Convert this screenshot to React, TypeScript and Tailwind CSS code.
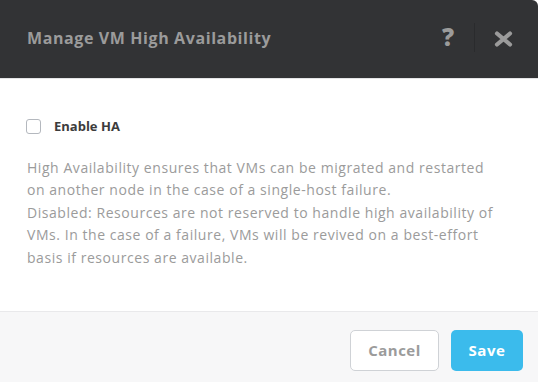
import { useState } from "react";

const App = () => {
  const [enabled, setEnabled] = useState(false);

  return (
    <div className="w-[538px] h-[382px] bg-white overflow-hidden font-['Open_Sans',sans-serif]">
      {/* Header */}
      <div className="h-[78px] bg-[#323335] rounded-tr-[6px] flex items-center justify-between pl-[27px] pr-[25px]">
        <h1 className="text-[16px] font-bold tracking-[0.6px] text-[#9b9b9b] mt-[-2px]">
          Manage VM High Availability
        </h1>
        <div className="flex items-center h-full">
          <span className="text-[24px] leading-none font-extrabold text-[#9b9b9b] mr-[20px] mt-[-4px]">?</span>
          <div className="w-px h-[29px] bg-[#2a2b2d] mr-[19px] mt-[-3px]" />
          <svg width="19" height="16" viewBox="0 0 19 16" className="mt-[-1px]">
            <path d="M3 2.5 L16 13.5 M16 2.5 L3 13.5" stroke="#9b9b9b" strokeWidth="4.2" strokeLinecap="round" />
          </svg>
        </div>
      </div>

      {/* Body */}
      <div className="h-[233px] border-t border-[#e4e4e6] pt-[38px] pl-[26px] pr-[20px]">
        <label className="flex items-center gap-[13px] cursor-pointer">
          <input
            type="checkbox"
            checked={enabled}
            onChange={() => setEnabled(!enabled)}
            className="appearance-none w-[15px] h-[15px] rounded-[3px] border-[1.5px] border-[#b4b8be] bg-white"
          />
          <span className="text-[13px] font-bold text-[#3c3c3c]">Enable HA</span>
        </label>
        <p className="mt-[20px] text-[14px] tracking-[0.55px] leading-[22.5px] text-[#9b9b9b] pl-px whitespace-nowrap">
          High Availability ensures that VMs can be migrated and restarted
          <br />
          on another node in the case of a single-host failure.
          <br />
          Disabled: Resources are not reserved to handle high availability of
          <br />
          VMs. In the case of a failure, VMs will be revived on a best-effort
          <br />
          basis if resources are available.
        </p>
      </div>

      {/* Footer */}
      <div className="h-[71px] bg-[#f7f7f8] border-t border-[#e9e9eb] flex items-start justify-end gap-[12px] pt-[18px] pr-[15px]">
        <button className="w-[89px] h-[41px] rounded-[5px] border border-[#cfd2d6] bg-white text-[15px] font-bold tracking-[0.5px] text-[#9b9b9b]">
          Cancel
        </button>
        <button className="w-[72px] h-[41px] rounded-[5px] bg-[#3bbbec] text-[15px] font-bold tracking-[0.6px] text-white">
          Save
        </button>
      </div>
    </div>
  );
};

export default App;
